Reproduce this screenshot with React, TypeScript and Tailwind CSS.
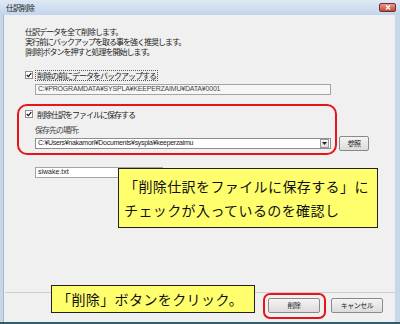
import React from "react";

const ui = "font-['MS_UI_Gothic','Noto_Sans_CJK_JP',sans-serif]";
const jp = "font-['Noto_Sans_CJK_JP',sans-serif]";

function Check({ label, focus }: { label: string; focus?: boolean }) {
  return (
    <div className="flex items-center h-[10px]">
      <div className="w-[8px] h-[8px] border border-[#8f8f8f] bg-white flex items-center justify-center">
        <svg width="6" height="6" viewBox="0 0 6 6">
          <path d="M0.8 3 L2.4 4.6 L5.3 1.2" stroke="#1a1a1a" strokeWidth="1.3" fill="none" />
        </svg>
      </div>
      <span
        className={`ml-[2px] px-[1px] leading-[9px] text-[8px] tracking-[-1px] text-[#222] ${
          focus ? "border border-dotted border-[#555]" : "border border-transparent"
        }`}
      >
        {label}
      </span>
    </div>
  );
}

function WinButton({ label, className = "" }: { label: string; className?: string }) {
  return (
    <div
      className={`h-[15px] flex items-center justify-center rounded-[2px] border border-[#8a8a8a] bg-gradient-to-b from-[#f4f4f4] to-[#dcdcdc] text-[7px] tracking-[-0.5px] text-[#222] ${className}`}
    >
      {label}
    </div>
  );
}

export default function App() {
  return (
    <div className={`relative w-[400px] h-[324px] overflow-hidden bg-[#c6d7ea] ${ui}`}>
      {/* タイトルバー */}
      <div className="h-[15px] flex items-center justify-between pl-[6px] pr-[4px] bg-gradient-to-b from-[#dfe9f5] to-[#c2d5eb]">
        <span className="text-[8px] tracking-[-1px] text-[#1e1e1e]">仕訳削除</span>
        <div className="w-[17px] h-[9px] rounded-[2px] border border-[#7a2a2a] bg-gradient-to-b from-[#e49a8e] to-[#c2473c] flex items-center justify-center">
          <svg width="6" height="5" viewBox="0 0 6 5">
            <path d="M1 0.5 L5 4.5 M5 0.5 L1 4.5" stroke="white" strokeWidth="1.3" />
          </svg>
        </div>
      </div>

      {/* 本体 */}
      <div className="absolute left-[3px] right-[5px] top-[15px] bottom-[2px] bg-[#f0f0f0] border-l border-[#a8b6c6]">
        <div className="pl-[21px] pt-[12px]">
          <div className="text-[8px] leading-[10px] tracking-[-1px] text-[#222]">
            <div>仕訳データを全て削除します。</div>
            <div>実行前にバックアップを取る事を強く推奨します。</div>
            <div>[削除]ボタンを押すと処理を開始します。</div>
          </div>

          <div className="mt-[13px]">
            <Check label="削除の前にデータをバックアップする" focus />
          </div>
          <div className="mt-[4px] ml-[10px] w-[296px] h-[11px] border border-[#a4a4a4] bg-[#f7f7f7] flex items-center pl-[2px] font-['Liberation_Sans',sans-serif] text-[7px] tracking-[-0.2px] text-[#444]">
            C:¥PROGRAMDATA¥SYSPLA¥KEEPERZAIMU¥DATA¥0001
          </div>

          <div className="mt-[14px]">
            <Check label="削除仕訳をファイルに保存する" />
          </div>
          <div className="mt-[6px] ml-[10px] text-[8px] leading-[9px] tracking-[-1px] text-[#444]">
            保存先の場所:
          </div>
          <div className="mt-[2px] ml-[10px] flex items-center">
            <div className="w-[296px] h-[11px] border border-[#8e8e8e] bg-white flex items-center justify-between pl-[2px]">
              <span className="font-['Liberation_Sans',sans-serif] text-[7px] tracking-[-0.3px] text-[#222]">
                C:¥Users¥nakamori¥Documents¥syspla¥keeperzaimu
              </span>
              <div className="w-[9px] h-[9px] mr-[1px] border border-[#9a9a9a] bg-gradient-to-b from-[#f6f6f6] to-[#dedede] flex items-center justify-center">
                <svg width="5" height="3" viewBox="0 0 5 3">
                  <path d="M0 0 L5 0 L2.5 3 Z" fill="#222" />
                </svg>
              </div>
            </div>
            <WinButton label="参照" className="ml-[8px] w-[30px] h-[12px]" />
          </div>

          <div className="mt-[16px] ml-[10px] w-[128px] h-[11px] border border-[#a4a4a4] bg-white flex items-center pl-[2px] font-['Liberation_Sans',sans-serif] text-[7px] text-[#222]">
            siwake.txt
          </div>
        </div>

        {/* 下部ボタン */}
        <div className="absolute left-[1px] right-0 top-[277px] border-t border-[#cfcfcf]" />
        <div className="absolute right-[12px] top-[283px] flex gap-[11px]">
          <WinButton label="削除" className="w-[52px]" />
          <WinButton label="キャンセル" className="w-[52px]" />
        </div>
      </div>

      {/* 下枠 */}
      <div className="absolute left-0 right-0 bottom-0 h-[2px] bg-[#2f5f6e]" />

      {/* 赤枠 */}
      <div className="absolute left-[17px] top-[104px] w-[320px] h-[51px] rounded-[10px] border-2 border-[#e8141c]" />
      <div className="absolute left-[263px] top-[293px] w-[63px] h-[26px] rounded-[7px] border-2 border-[#e8141c]" />

      {/* 吹き出し */}
      <div
        className={`absolute left-[118px] top-[168px] w-[260px] h-[60px] border border-[#222] bg-[#ffff6e] pl-[5px] pt-[5px] whitespace-nowrap text-[14px] tracking-[0.4px] leading-[24px] text-[#111] ${jp}`}
      >
        <div>「削除仕訳をファイルに保存する」に</div>
        <div>チェックが入っているのを確認し</div>
      </div>
      <div
        className={`absolute left-[51px] top-[285px] w-[204px] h-[28px] border border-[#222] bg-[#ffff6e] pl-[5px] flex items-center whitespace-nowrap text-[14px] tracking-[0.4px] text-[#111] ${jp}`}
      >
        「削除」ボタンをクリック。
      </div>
    </div>
  );
}
